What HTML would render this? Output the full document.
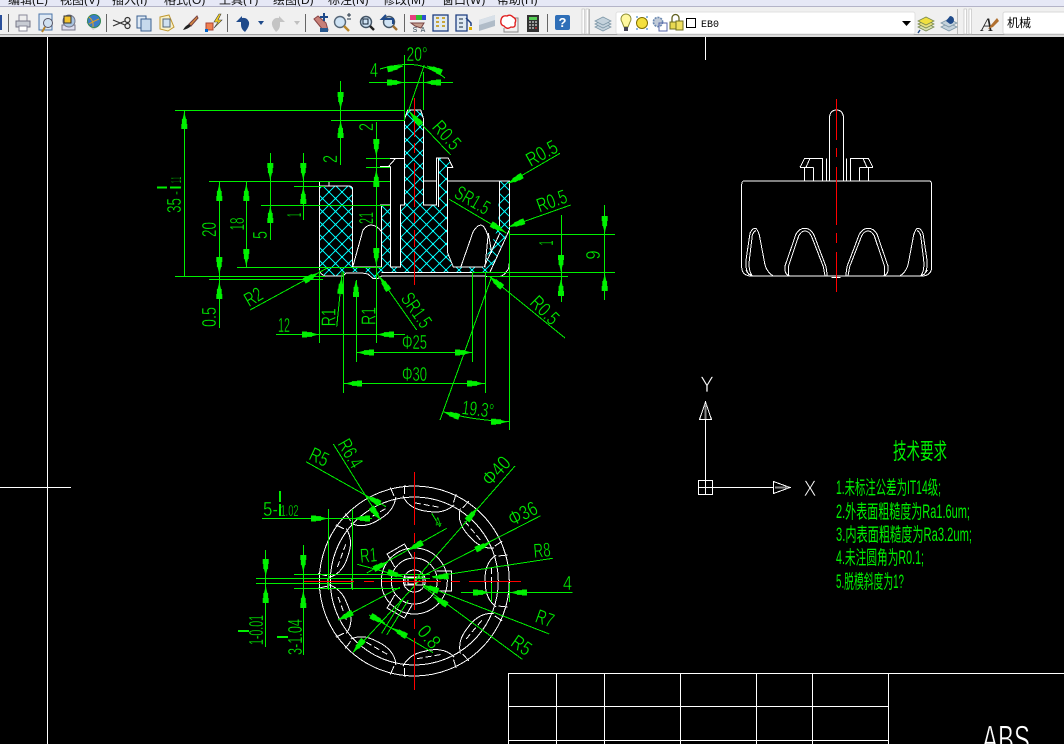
<!DOCTYPE html>
<html><head><meta charset="utf-8"><title>CAD</title>
<style>
html,body{margin:0;padding:0;background:#000;width:1064px;height:744px;overflow:hidden}
svg{display:block}
.w{fill:none;stroke:#fff;stroke-width:1}
.g{fill:none;stroke:#00f000;stroke-width:1}
.r{fill:none;stroke:#f00;stroke-width:1.4}
text{font-family:"Liberation Sans","Noto Sans CJK SC",sans-serif}
.t{fill:#00f000;font-size:20px;text-anchor:middle;stroke:#000;stroke-width:.4}
.c{fill:#00f000;font-size:19px}
.m{fill:#111;font-size:12px}
.l{fill:#fff;stroke:#000;stroke-width:.7}
</style></head><body>
<svg width="1064" height="744" viewBox="0 0 1064 744" xmlns="http://www.w3.org/2000/svg">
<defs>
<path id="a" d="M0-.5H1L6-1.7V-2.4H11V-3H16V3H11V2.400H6V1.700L1 .5H0Z" fill="#00f000"/>
<pattern id="h" patternUnits="userSpaceOnUse" width="13" height="13" patternTransform="translate(4,10)">
<path d="M0 0L13 13M13 0L0 13" stroke="#00e8e8" stroke-width="1" fill="none" shape-rendering="crispEdges"/>
<rect x="5.500" y="5.500" width="2" height="2" fill="#0ff" shape-rendering="crispEdges"/><rect x="-1" y="-1" width="2" height="2" fill="#0ff" shape-rendering="crispEdges"/><rect x="12" y="-1" width="2" height="2" fill="#0ff" shape-rendering="crispEdges"/><rect x="-1" y="12" width="2" height="2" fill="#0ff" shape-rendering="crispEdges"/><rect x="12" y="12" width="2" height="2" fill="#0ff" shape-rendering="crispEdges"/>
</pattern>
<g id="lobe" class="w"><path d="M82-26C72-20 70-8 71 2C71 12 74 20 82 26"/><path d="M84-25L93-26M84 25L93 26"/><path d="M77-13V13" stroke-dasharray="6 3"/></g>
<g id="tab" class="w"><path d="M22-10H37V10H22"/></g>
<g id="loops" fill="none" stroke="#fff" stroke-width="3">
<path d="M88 555Q75 540 78 510L90 430Q97 415 105 415Q112 415 118 435L135 525Q142 548 160 558"/>
<path d="M95 555Q85 540 88 510L97 435Q102 423 108 422"/>
<path d="M215 558Q197 558 195 540V528L228 432Q238 415 254 415Q272 415 282 435L318 530L322 558"/>
<path d="M205 555V530L236 438Q244 423 254 423Q268 423 275 440L310 530L315 558"/>
<path d="M240 232L254 205H308V273M240 232H280M253 232V273M280 232V273M270 205L258 232M320 205V273M328 273V85Q330 60 349 60"/>
</g>
</defs>

<rect width="1064" height="744" fill="#000"/>

<!-- toolbars -->
<rect width="1064" height="7" fill="#e6e8f6"/>
<g class="m">
<text x="8" y="4">编辑(E)</text><text x="60" y="4">视图(V)</text><text x="112" y="4">插入(I)</text><text x="164" y="4">格式(O)</text><text x="219" y="4">工具(T)</text><text x="273" y="4">绘图(D)</text><text x="328" y="4">标注(N)</text><text x="383" y="4">修改(M)</text><text x="442" y="4">窗口(W)</text><text x="497" y="4">帮助(H)</text>
</g>
<rect y="6" width="1064" height="1" fill="#b4b4c8"/>
<rect y="7" width="1064" height="28" fill="#f0f0f0"/>
<rect y="34" width="1064" height="1" fill="#a0a0a0"/>
<rect y="35" width="1064" height="2" fill="#dcdcdc"/>
<!-- separators -->
<g fill="#666"><rect x="8" y="14" width="1" height="18"/><rect x="106" y="14" width="1" height="18"/><rect x="227" y="14" width="1" height="18"/><rect x="305" y="14" width="1" height="18"/><rect x="404" y="14" width="1" height="18"/><rect x="547" y="14" width="1" height="18"/></g>
<rect x="0" y="15" width="2" height="15" fill="#2a4f9a"/>
<!-- grips -->
<g fill="#fff" stroke="#bbb" stroke-width=".6"><rect x="582" y="9" width="2.500" height="25"/><rect x="586" y="9" width="2.500" height="25"/><rect x="964" y="9" width="2.500" height="25"/><rect x="969" y="9" width="2.500" height="25"/></g>
<rect x="589" y="9" width="1" height="25" fill="#bbb"/><rect x="957" y="9" width="1" height="25" fill="#bbb"/>
<!-- printer -->
<g transform="translate(23,23)"><path d="M-4-8H4V-2H-4Z" fill="#eee" stroke="#889"/><path d="M-7-2H7V4H-7Z" fill="#c8ccd4" stroke="#778"/><path d="M-4 3H4V8H-4Z" fill="#fff" stroke="#889"/></g>
<!-- preview -->
<g transform="translate(46,22)"><path d="M-7-8H6V8H-7Z" fill="#dfe9f3" stroke="#4a74a8"/><circle cx="2" cy="1" r="4.500" fill="#cfe0f0" stroke="#556"/><path d="M-1 5L-4 10" stroke="#b8862a" stroke-width="2"/></g>
<!-- plot -->
<g transform="translate(69,23)"><path d="M-7 2H6V7H-7Z" fill="#dde" stroke="#778"/><circle cx="0" cy="-2" r="6" fill="#a9c4e0" stroke="#778"/><path d="M-5-7H2V0H-5Z" fill="#f4c430" stroke="#333"/></g>
<!-- globe -->
<g transform="translate(93,22)"><path d="M-7 0L0 8L5 5V-2Z" fill="#ccc"/><circle cx="1" cy="-1" r="6.500" fill="#3a7cc8" stroke="#385"/><path d="M-4-5Q1-1 0 5M6-3Q1-1-4 2" stroke="#e6a020" fill="none"/></g>
<!-- scissors -->
<g transform="translate(121,23)" fill="none" stroke="#333" stroke-width="1.200"><path d="M-8-3L4 2M-8 3L4-2"/><circle cx="6.500" cy="-3" r="2.500"/><circle cx="6.500" cy="3" r="2.500"/></g>
<!-- copy -->
<g transform="translate(144,23)"><path d="M-7-7H2V5H-7Z" fill="#dfeaf5" stroke="#3a5f90"/><path d="M-3-4H7V8H-3Z" fill="#c6d9ec" stroke="#3a5f90"/></g>
<!-- paste -->
<g transform="translate(166,23)"><path d="M-6-6L3-8L8 4L2 8L-6 6Z" fill="#f8f0c8" stroke="#c09830"/><path d="M-3-4H4V4H-3Z" fill="#cfe0f0" stroke="#567"/></g>
<!-- brush -->
<g transform="translate(190,23)"><path d="M7-7L-1 1L1 3L8-5Z" fill="#d88a40" stroke="#744"/><path d="M-1 1Q-5 3-7 7Q-2 6 1 3Z" fill="#222"/></g>
<!-- matchprop -->
<g transform="translate(213,23)"><rect x="-7" y="0" width="7" height="7" fill="#f08050" stroke="#a43"/><path d="M6-9L1-1H5L1 5L9-3H5L8-9Z" fill="#f4d020" stroke="#444" stroke-width=".6"/><rect x="-8" y="6" width="3" height="3" fill="#06c"/></g>
<!-- undo -->
<g transform="translate(243,23)"><path d="M-1-7L-7-1H-2V2Q-2 6 2 9Q7 3 6-1Q4-6-1-5Z" fill="#1f4a8a"/></g>
<path d="M258 21H264L261 25Z" fill="#1f4a8a"/>
<g transform="translate(278,23)"><path d="M1-7L7-1H2V2Q2 6-2 9Q-7 3-6-1Q-4-6 1-5Z" fill="#c4c4c4"/></g>
<path d="M294 21H300L297 25Z" fill="#c0c0c0"/>
<!-- pan -->
<g transform="translate(321,23)"><path d="M-7-4L2 7H7L5 0L-3-7Z" fill="#c88078" stroke="#844"/><rect x="-1" y="5" width="8" height="4" fill="#2a5a90"/><path d="M3-10V-2M-1-6H7" stroke="#1f4a8a" stroke-width="2"/></g>
<!-- zooms -->
<g transform="translate(342,22)"><circle r="5.500" cx="-2" fill="#cfe3f4" stroke="#567" stroke-width="1.400"/><path d="M2 4L7 9" stroke="#b8862a" stroke-width="2.400"/><path d="M5-7H9M7-9V-5M5-3H9" stroke="#234"/></g>
<g transform="translate(366,22)"><circle r="5.500" fill="#cfe3f4" stroke="#456" stroke-width="1.400"/><rect x="-3" y="-3" width="5" height="5" fill="none" stroke="#123"/><path d="M4 4L8 8" stroke="#222" stroke-width="2.400"/></g>
<g transform="translate(389,22)"><circle r="5.500" fill="#cfe3f4" stroke="#456" stroke-width="1.400"/><path d="M-3-7L-7-3H4V2" fill="none" stroke="#1f4a8a" stroke-width="2"/><path d="M4 4L8 8" stroke="#a07030" stroke-width="2.400"/></g>
<!-- props -->
<g transform="translate(418,23)"><rect x="-8" y="-8" width="16" height="5" fill="#e84080"/><rect x="-2" y="-8" width="6" height="5" fill="#30c030"/><rect x="4" y="-8" width="4" height="5" fill="#3050d0"/><path d="M-7 0H6L3 5L-3 3Z" fill="#c8a090" stroke="#744"/><text x="-3" y="9" font-size="7" fill="#345" text-anchor="middle">S</text><text x="5" y="9" font-size="7" fill="#345" text-anchor="middle">A</text></g>
<g transform="translate(441,23)"><rect x="-8" y="-8" width="15" height="16" fill="#dfe9f3" stroke="#1f3f80" stroke-width="1.300"/><path d="M-5-5h3M1-5h3M-5-1h3M1-1h3M-5 3h3M1 3h3" stroke="#c09000" stroke-width="1.600"/></g>
<g transform="translate(464,23)"><path d="M-8-8H3V8H-8Z" fill="#dfe9f3" stroke="#1f3f80" stroke-width="1.300"/><path d="M-5-4h4M-5 0h4M-5 4h4" stroke="#567" stroke-width="1.500"/><path d="M2-5L7 0V3" fill="none" stroke="#1f3f80" stroke-width="1.500"/><rect x="5" y="4" width="3" height="3" fill="#e0b000"/></g>
<g transform="translate(487,23)"><path d="M-8-3L8-8V3L-8 8Z" fill="#b0bcc8"/><path d="M-8-3L8-8V-3L-8 2Z" fill="#d8e0e8"/></g>
<g transform="translate(509,23)"><path d="M5-5H9V9H-5V5" fill="none" stroke="#888"/><path d="M-8-3Q-7-8-2-7Q1-9 4-6Q8-4 6 0Q7 5 2 4Q-2 7-5 3Q-9 2-8-3Z" fill="#fff" stroke="#e02020" stroke-width="1.400"/></g>
<!-- calc -->
<g transform="translate(533,23)"><rect x="-6" y="-8" width="12" height="17" fill="#333"/><rect x="-4" y="-6" width="8" height="3" fill="#5c5"/><path d="M-4-1h2M-1-1h2M2-1h2M-4 2h2M-1 2h2M2 2h2M-4 5h2M-1 5h2" stroke="#fff"/><path d="M2 5h2" stroke="#f33"/></g>
<!-- help -->
<rect x="555" y="15" width="15" height="15" rx="2" fill="#2f6fb8"/>
<text x="562.500" y="27" font-size="13" font-weight="bold" fill="#fff" text-anchor="middle">?</text>
<!-- layers -->
<g transform="translate(603,24)" fill="#c4d2dc" stroke="#7f98a8" stroke-width=".8"><path d="M-8 3L0-1L8 3L0 7Z"/><path d="M-8 0L0-4L8 0L0 4Z"/><path d="M-8-3L0-7L8-3L0 1Z"/></g>
<!-- combobox -->
<rect x="616" y="12" width="299" height="22" rx="2" fill="#fff" stroke="#e0e0e0"/>
<g transform="translate(626,23)"><path d="M-4-1A5 5 0 1 1 4-1L2 4H-2Z" fill="#fff8a0" stroke="#8a8a30"/><rect x="-2" y="4" width="4" height="4" fill="#445"/></g>
<circle cx="642" cy="23" r="5.500" fill="#f4e040" stroke="#807000"/><path d="M636 17h2M646 17h2M636 29h2M646 29h2" stroke="#1f6fc8"/>
<g transform="translate(658,22)"><circle r="4.600" fill="#c0cad8" stroke="#6a88b0" stroke-width="1.600" stroke-dasharray="2 1"/><rect x="1" y="1" width="8" height="8" fill="none" stroke="#56a"/></g>
<g transform="translate(676,22)"><path d="M-4 0V-4A3.400 3.400 0 0 1 3-4V0" fill="none" stroke="#606020" stroke-width="1.300"/><rect x="0" y="-1" width="7" height="9" fill="#f0e060" stroke="#707020"/><rect x="-6" y="0" width="6" height="7" fill="#e8d850" stroke="#707020"/></g>
<rect x="686.500" y="18.500" width="9" height="9" fill="#fff" stroke="#000"/>
<text x="701" y="27" font-size="10" fill="#000" textLength="18" lengthAdjust="spacingAndGlyphs" style="font-family:'Liberation Mono',monospace">EB0</text>
<path d="M902 21H911L906.500 26Z" fill="#000"/>
<g transform="translate(926,24)" stroke="#7a8a50" stroke-width=".8"><path d="M-8 3L0-1L8 3L0 7Z" fill="#d8e0b0"/><path d="M-8 0L0-4L8 0L0 4Z" fill="#e8e080"/><path d="M-8-3L0-7L8-3L0 1Z" fill="#f0e040"/><path d="M-8 9L-6 6" stroke="#1f4a8a" stroke-width="1.400"/></g>
<g transform="translate(949,24)" stroke="#7f98a8" stroke-width=".8" fill="#c4d2dc"><path d="M-8 3L0-1L8 3L0 7Z"/><path d="M-8-1L0-5L8-1L0 3Z"/><path d="M1-8A4 4 0 1 1 1 0L-3-3Z" fill="#1f4a8a" stroke="none"/></g>
<text x="981" y="31" font-size="19" font-style="italic" fill="#222" style="font-family:'Liberation Serif',serif">A</text>
<path d="M997 18L991 25L988 29L993 27L999 21Z" fill="#b07030"/>
<rect x="1003" y="12" width="70" height="22" rx="2" fill="#fff" stroke="#d8d8d8"/>
<text x="1007" y="27" font-size="12" fill="#000">机械</text>

<!-- cursor -->
<g shape-rendering="crispEdges">
<path class="w" d="M47.500 37V744M0 487.500H71M705.500 37V60"/>

<!-- title block -->
<path class="w" d="M508.500 673.500H1064M508.500 706.500H888.500M508.500 740.500H888.500M508.500 673V744M556.500 673V744M604.500 673V744M680.500 673V744M756.500 673V744M812.500 673V744M888.500 673V744"/>

<!-- hatch section -->
<path fill="url(#h)" d="M319.300 186H352.700V267H381.700V205H390.300V267H400.700V205H404.300V120L407.700 110H420.700L423.300 118V205H438.300V158H448.300L452.700 167H447.700V253L453.300 267H483L490 247L498 228L499.300 181H509.300V228L490 272L484 272.700H381.700L375 278L365 272H345L343 276H325L319.300 270Z"/>
<g class="w">
<path d="M319.300 181.500V270Q320 274 325 276H343L346 273H362L368 274L373 278.500H378L381.700 276H485"/>
<path d="M319.300 186H349Q352.700 186 352.700 190V267H381.700V205H390.300V267H400.700V205H404.300V120L407.700 110H420.700L423.300 118V205H436.700V158H448.300L452.700 167.300H447.700V253L453.300 267H483"/>
<path d="M319.300 181.500H329V186M438.300 158V207M423.300 181H436.700M447.700 181H509.300V263Q509 270 506.700 271Q505 275 500 276.500H485"/>
<path d="M499.300 181V228L498 228M381.700 272.700H484M390.700 166.700V205M380 205H390.700M380 166.700H390.700L388.300 166.700L395.700 158.300H404.300M380 158.300H395.700"/>
<path d="M352.700 267L363 230Q367 225 371 225Q377 225 381.700 232"/>
<path d="M460.700 267.300L473 232Q477 225 481 225Q485 226 488 236L485 267.300M488.300 233L491.700 253M484 267L500 233"/>
<path d="M490 272L509.300 230"/>
</g>

<!-- side view -->
<g transform="translate(720,90) scale(.33333)" fill="none" stroke="#fff" stroke-width="3">
<path d="M65 530V285Q65 273 72 273H628Q635 273 635 285V530Q635 555 610 558H90Q65 555 65 530Z"/>
<path d="M78 540Q85 555 100 558M622 540Q615 555 600 558M335 562H362"/>
<use href="#loops"/>
<use href="#loops" transform="matrix(-1,0,0,1,699,0)"/>
</g>
<path class="r" d="M836.500 99V140M836.500 148V157M836.500 167V225M836.500 233V243M836.500 252V292"/>

<!-- main view red -->
<path class="r" d="M414.500 98V137M414.500 143V153M414.500 163V207M414.500 213V223M414.500 230V247M414.500 252V285"/>

<!-- main view dims -->
<path class="g" d="M175 110.500H405M331 120.500H405M184.500 110V276M175 276.500H325M209 181.500H390M294 186.500H325M261 205.500H390M366 158.500H390M366 167.500H390M237 267.500H382M209 279.500H323M340.500 81V165M219.500 181V328M246.500 181V267M270.500 153V240M303.500 153V220M376.500 122V343M369 82.500H453M404.500 55V120M423.500 72V110"/>
<path class="g" d="M380 69Q400 63 417 65Q432 68 445 78M424.300 65L408 112M410 112L450.700 155M508.300 183.300L560 153.300M509.300 226.700L570.700 205M449.300 199.300L506.700 233.300"/>
<path class="g" d="M510 234.500H615M473 272.500H615M487 276.500H568M604.500 205V300M561.500 215V302"/>
<path class="g" d="M250 310L326.700 268.300M336.700 326.700L342.300 271.700M343.500 272V393M319.500 270V343M276 334.500H405M356.500 280V362M472.500 272V362M485.500 272V393M509.500 230V430M356 352.500H472.500M343 383.500H485.500M376.700 273.300L416.700 330M490 277L565 338M440 420L491.700 276.700M443 411.700Q470 420 509.300 421.700"/>

<!-- top view -->
<g class="w">
<circle cx="414.300" cy="581" r="95"/><circle cx="414.300" cy="581" r="84"/><circle cx="414.300" cy="581" r="33"/><circle cx="414.300" cy="581" r="23"/><circle cx="414.300" cy="581" r="11"/>
<rect x="405" y="577" width="18" height="8"/><rect x="408" y="578" width="8" height="6"/>
<path d="M328 578.500H352V588.500H328Z"/>
</g>
<g transform="translate(414.300,581)">
<use href="#lobe"/><use href="#lobe" transform="rotate(-40)"/><use href="#lobe" transform="rotate(-80)"/><use href="#lobe" transform="rotate(-120)"/><use href="#lobe" transform="rotate(-160)"/><use href="#lobe" transform="rotate(-200)"/><use href="#lobe" transform="rotate(-240)"/><use href="#lobe" transform="rotate(-280)"/><use href="#lobe" transform="rotate(-320)"/>
<use href="#tab"/><use href="#tab" transform="rotate(120)"/><use href="#tab" transform="rotate(240)"/>
</g>
<path class="g" d="M306 461.700L386 506.700M333.300 444L380.700 520M262 518.500H372M328.500 509V590M352.500 509V590M256 578.500H430M256 583.500H352M294 574.500H430M294 588.500H400M265.500 550V647M303.500 545V655"/>
<path class="g" d="M357.300 564.300L403 576.700M366.700 573L446.700 528.300M431.700 513.300L440 526.700M515 466L415 580M540.700 515.700L415 580M552.700 558.300L432.300 576.700M549.300 634L423.300 585M522.300 659.300L423.300 586.700M461 592.500H572.700M491.500 583V602M509.500 583V602M369 615L433 652.700M381.700 633.300L403.300 598.300M386.700 635L408.300 600M338.300 620L400 587.300M353.300 652.300L420 580"/>
<path class="r" d="M414.500 472V525M414.500 533V543M414.500 552V610M414.500 619V629M414.500 638V690M304 581.500H354M364 581.500H374M382 581.500H441M451 581.500H460M469 581.500H521"/>
</g>

<!-- arrows main -->
<use href="#a" transform="translate(184.300,113) rotate(90)"/>
<use href="#a" transform="translate(340.600,108) rotate(-90)"/>
<use href="#a" transform="translate(340.600,122) rotate(90)"/>
<use href="#a" transform="translate(219.300,185) rotate(90)"/>
<use href="#a" transform="translate(246.300,185) rotate(90)"/>
<use href="#a" transform="translate(270.300,179) rotate(-90)"/>
<use href="#a" transform="translate(270.300,207) rotate(90)"/>
<use href="#a" transform="translate(303.300,179) rotate(-90)"/>
<use href="#a" transform="translate(303.300,188) rotate(90)"/>
<use href="#a" transform="translate(376.300,155) rotate(-90)"/>
<use href="#a" transform="translate(376.300,171) rotate(90)"/>
<use href="#a" transform="translate(219.300,273) rotate(-90)"/>
<use href="#a" transform="translate(219.300,283) rotate(90)"/>
<use href="#a" transform="translate(246.300,265) rotate(-90)"/>
<use href="#a" transform="translate(376.300,264) rotate(-90)"/>
<use href="#a" transform="translate(403,82.500) rotate(180)"/>
<use href="#a" transform="translate(425,82.500)"/>
<use href="#a" transform="translate(403,66) rotate(168)"/>
<use href="#a" transform="translate(427,66) rotate(24)"/>
<use href="#a" transform="translate(410,112.700) rotate(47)"/>
<use href="#a" transform="translate(508.300,183.300) rotate(-29)"/>
<use href="#a" transform="translate(509.300,226.700) rotate(-20)"/>
<use href="#a" transform="translate(505,232) rotate(210)"/>
<use href="#a" transform="translate(604.700,232) rotate(-90)"/>
<use href="#a" transform="translate(604.700,275) rotate(90)"/>
<use href="#a" transform="translate(561,271) rotate(-90)"/>
<use href="#a" transform="translate(561,280) rotate(90)"/>
<use href="#a" transform="translate(318,273) rotate(150)"/>
<use href="#a" transform="translate(341.700,278) rotate(95)"/>
<use href="#a" transform="translate(356,281) rotate(90)"/>
<use href="#a" transform="translate(380,277) rotate(57)"/>
<use href="#a" transform="translate(490,277) rotate(40)"/>
<use href="#a" transform="translate(318,334.500) rotate(180)"/>
<use href="#a" transform="translate(378,334.500)"/>
<use href="#a" transform="translate(358,352.500)"/>
<use href="#a" transform="translate(471,352.500) rotate(180)"/>
<use href="#a" transform="translate(346,383.500)"/>
<use href="#a" transform="translate(483,383.500) rotate(180)"/>
<use href="#a" transform="translate(444,412) rotate(18)"/>
<use href="#a" transform="translate(507,421.700) rotate(180)"/>
<!-- arrows top view -->
<use href="#a" transform="translate(366,496) rotate(28)"/>
<use href="#a" transform="translate(380.700,520) rotate(-127)"/>
<use href="#a" transform="translate(327,518.500) rotate(180)"/>
<use href="#a" transform="translate(354,518.500)"/>
<use href="#a" transform="translate(265.700,575) rotate(-90)"/>
<use href="#a" transform="translate(265.700,587) rotate(90)"/>
<use href="#a" transform="translate(303.300,571) rotate(-90)"/>
<use href="#a" transform="translate(303.300,592) rotate(90)"/>
<use href="#a" transform="translate(388,561.700) rotate(152)"/>
<use href="#a" transform="translate(403,576.700) rotate(197)"/>
<use href="#a" transform="translate(408.300,550) rotate(-28)"/>
<use href="#a" transform="translate(477.300,508.300) rotate(130)"/>
<use href="#a" transform="translate(490,542.700) rotate(154)"/>
<use href="#a" transform="translate(432.700,577.700) rotate(-6)"/>
<use href="#a" transform="translate(423.300,585.500) rotate(20)"/>
<use href="#a" transform="translate(433.300,596.700) rotate(31)"/>
<use href="#a" transform="translate(489,592.500) rotate(180)"/>
<use href="#a" transform="translate(511,592.500)"/>
<use href="#a" transform="translate(385,623.300) rotate(208)"/>
<use href="#a" transform="translate(392.700,628.300) rotate(30)"/>
<use href="#a" transform="translate(338.300,620) rotate(-28)"/>
<use href="#a" transform="translate(353.300,652) rotate(-50)"/>

<!-- solid tolerance bars -->
<g fill="#00f000">
<rect x="157" y="186.500" width="10" height="2"/><rect x="170" y="186.500" width="11" height="2"/>
<rect x="279" y="491" width="2" height="11"/><rect x="279" y="504" width="2" height="12"/>
<rect x="238" y="630" width="11" height="2"/><rect x="277" y="636" width="11" height="2"/>
</g>

<!-- dim text -->
<g class="t">
<text transform="translate(181,205.500) rotate(-90)" textLength="15" lengthAdjust="spacingAndGlyphs">35</text>
<text transform="translate(181,193) rotate(-90)" font-size="16" textLength="4" lengthAdjust="spacingAndGlyphs">-</text>
<text transform="translate(181,180) rotate(-90)" style="font-size:15px" textLength="6" lengthAdjust="spacingAndGlyphs">1.1</text>
<text transform="translate(216,229.500) rotate(-90)" textLength="15" lengthAdjust="spacingAndGlyphs">20</text>
<text transform="translate(244,224) rotate(-90)" textLength="13" lengthAdjust="spacingAndGlyphs">18</text>
<text transform="translate(267,235) rotate(-90)" textLength="8" lengthAdjust="spacingAndGlyphs">5</text>
<text transform="translate(301,215) rotate(-90)" textLength="4" lengthAdjust="spacingAndGlyphs">1</text>
<text transform="translate(337,159) rotate(-90)" textLength="8" lengthAdjust="spacingAndGlyphs">2</text>
<text transform="translate(373,127) rotate(-90)" textLength="8" lengthAdjust="spacingAndGlyphs">2</text>
<text transform="translate(373,218) rotate(-90)" textLength="12" lengthAdjust="spacingAndGlyphs">21</text>
<text transform="translate(216,317) rotate(-90)" textLength="20" lengthAdjust="spacingAndGlyphs">0.5</text>
<text x="374" y="77" textLength="8" lengthAdjust="spacingAndGlyphs">4</text>
<text x="417" y="61" textLength="21" lengthAdjust="spacingAndGlyphs">20°</text>
<text transform="translate(447,135) rotate(48) translate(0,7)" textLength="32" lengthAdjust="spacingAndGlyphs">R0.5</text>
<text transform="translate(541.700,153) rotate(-29) translate(0,7)" textLength="33" lengthAdjust="spacingAndGlyphs">R0.5</text>
<text transform="translate(551.700,200.700) rotate(-20) translate(0,7)" textLength="31" lengthAdjust="spacingAndGlyphs">R0.5</text>
<text transform="translate(472.700,200) rotate(30) translate(0,7)" textLength="37" lengthAdjust="spacingAndGlyphs">SR1.5</text>
<text transform="translate(595,255) rotate(-90) translate(0,5)" textLength="9" lengthAdjust="spacingAndGlyphs">9</text>
<text transform="translate(548,243) rotate(-90) translate(0,5)" textLength="5" lengthAdjust="spacingAndGlyphs">1</text>
<text transform="translate(253.300,296.700) rotate(-30) translate(0,7)" textLength="18" lengthAdjust="spacingAndGlyphs">R2</text>
<text transform="translate(328.300,317.300) rotate(-90) translate(0,7)" textLength="18" lengthAdjust="spacingAndGlyphs">R1</text>
<text transform="translate(368.300,316) rotate(-90) translate(0,7)" textLength="18" lengthAdjust="spacingAndGlyphs">R1</text>
<text x="284" y="332" textLength="12" lengthAdjust="spacingAndGlyphs">12</text>
<text transform="translate(416.700,310) rotate(55) translate(0,7)" textLength="38" lengthAdjust="spacingAndGlyphs">SR1.5</text>
<text transform="translate(545,310) rotate(45) translate(0,7)" textLength="32" lengthAdjust="spacingAndGlyphs">R0.5</text>
<text x="414.500" y="349" textLength="25" lengthAdjust="spacingAndGlyphs">Φ25</text>
<text x="414.500" y="381" textLength="25" lengthAdjust="spacingAndGlyphs">Φ30</text>
<text transform="translate(478,409) rotate(7) translate(0,7)" textLength="32" lengthAdjust="spacingAndGlyphs">19.3°</text>
<text transform="translate(319.300,456.700) rotate(25) translate(0,7)" textLength="19" lengthAdjust="spacingAndGlyphs">R5</text>
<text transform="translate(350.700,453.300) rotate(60) translate(0,7)" textLength="30" lengthAdjust="spacingAndGlyphs">R6.4</text>
<text x="270.500" y="516" textLength="15" lengthAdjust="spacingAndGlyphs">5-</text>
<text x="289.500" y="516" style="font-size:16px" textLength="18" lengthAdjust="spacingAndGlyphs">1.02</text>
<text transform="translate(263,630) rotate(-90)" textLength="30" lengthAdjust="spacingAndGlyphs">1-0.01</text>
<text transform="translate(302,637) rotate(-90)" textLength="36" lengthAdjust="spacingAndGlyphs">3-1.04</text>
<text transform="translate(368.500,555) rotate(-5) translate(0,7)" textLength="17" lengthAdjust="spacingAndGlyphs">R1</text>
<text transform="translate(438,522) rotate(-20) translate(0,5)" style="font-size:14px" textLength="7" lengthAdjust="spacingAndGlyphs">4</text>
<text transform="translate(496,470.700) rotate(-47) translate(0,7)" textLength="32" lengthAdjust="spacingAndGlyphs">Φ40</text>
<text transform="translate(522.700,513.300) rotate(-27) translate(0,7)" textLength="30" lengthAdjust="spacingAndGlyphs">Φ36</text>
<text transform="translate(542,550) rotate(-5) translate(0,7)" textLength="17" lengthAdjust="spacingAndGlyphs">R8</text>
<text transform="translate(545,618.300) rotate(20) translate(0,7)" textLength="18" lengthAdjust="spacingAndGlyphs">R7</text>
<text transform="translate(521.700,645) rotate(35) translate(0,7)" textLength="20" lengthAdjust="spacingAndGlyphs">R5</text>
<text x="567.500" y="590" textLength="9" lengthAdjust="spacingAndGlyphs">4</text>
<text transform="translate(429.300,636.700) rotate(50) translate(0,7)" textLength="24" lengthAdjust="spacingAndGlyphs">0.8</text>
</g>

<!-- UCS icon -->
<g shape-rendering="crispEdges"><path class="w" d="M698.500 480.500H712.500V494.500H698.500ZM705.500 480V495M698 487.500H773M705.500 419V480"/>
<path class="w" d="M705.500 402L699.500 419.500H711.500ZM773.500 481.500V493.500L790 487.500Z"/>
<path d="M705.500 404V419M775 487.500H788" stroke="#888" stroke-width="2" fill="none"/></g>
<text x="707" y="392" class="l" style="font-size:22px" text-anchor="middle" textLength="14" lengthAdjust="spacingAndGlyphs">Y</text>
<text x="810" y="496" class="l" style="font-size:22px" text-anchor="middle" textLength="13" lengthAdjust="spacingAndGlyphs">X</text>

<!-- notes -->
<text x="893" y="459" class="c" style="font-size:22px" textLength="54" lengthAdjust="spacingAndGlyphs">技术要求</text>
<text x="836" y="494" class="c" textLength="105" lengthAdjust="spacingAndGlyphs">1.未标注公差为IT14级;</text>
<text x="836" y="518" class="c" textLength="134" lengthAdjust="spacingAndGlyphs">2.外表面粗糙度为Ra1.6um;</text>
<text x="836" y="541" class="c" textLength="136" lengthAdjust="spacingAndGlyphs">3.内表面粗糙度为Ra3.2um;</text>
<text x="836" y="564" class="c" textLength="88" lengthAdjust="spacingAndGlyphs">4.未注圆角为R0.1;</text>
<text x="836" y="588" class="c" textLength="68" lengthAdjust="spacingAndGlyphs">5.脱模斜度为1?</text>

<text x="982" y="752" font-size="38" class="l" style="font-size:38px" textLength="48" lengthAdjust="spacingAndGlyphs">ABS</text>
</svg>
</body></html>
